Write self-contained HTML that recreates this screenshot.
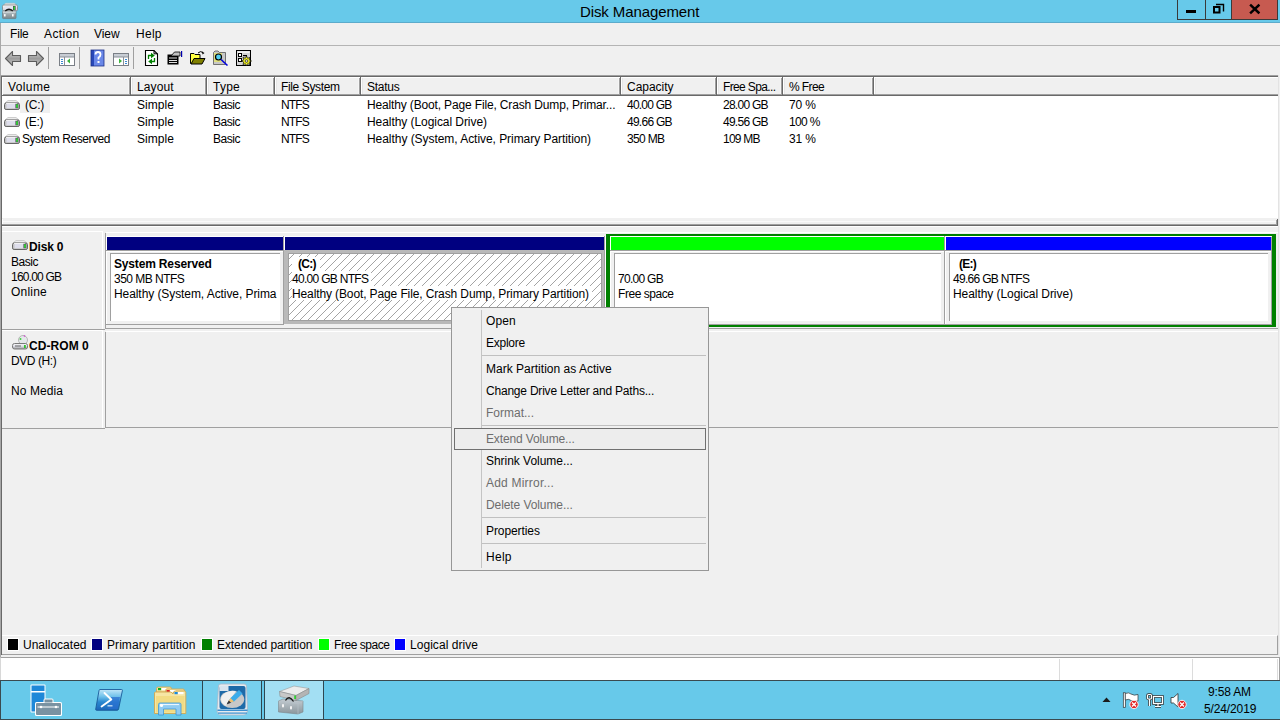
<!DOCTYPE html>
<html><head><meta charset="utf-8">
<style>
*{margin:0;padding:0;box-sizing:border-box}
html,body{width:1280px;height:720px;overflow:hidden;background:#f0f0f0;font-family:"Liberation Sans",sans-serif;font-size:12px;color:#000;position:relative}
.a{position:absolute}
.t{position:absolute;white-space:nowrap;line-height:14px;font-size:12px}
.b{font-weight:bold}
.g{color:#6d6d6d}
.hd{position:absolute;top:77px;width:1px;height:18px}
.hatch{background-color:#fff;background-image:repeating-linear-gradient(-45deg,#fff 0,#fff 4.6px,#9a9a9a 4.6px,#9a9a9a 5.66px)}
</style></head><body>
<svg width="0" height="0" style="position:absolute">
 <defs>
  <linearGradient id="dg" x1="0" y1="0" x2="0" y2="1"><stop offset="0" stop-color="#f8f8f8"/><stop offset="0.5" stop-color="#dcdce6"/><stop offset="1" stop-color="#9a9a9a"/></linearGradient>
  <symbol id="drvicon" viewBox="0 0 16 10">
   <path d="M4 0.5 H12 L15 3 H1 Z" fill="#ececec" stroke="#c4c4c4" stroke-width="0.8"/>
   <rect x="0.5" y="3" width="15" height="6.5" rx="1.6" fill="#c4c4c4" stroke="#666" stroke-width="1"/>
   <rect x="2.5" y="3.6" width="9" height="4.6" fill="#dedeec"/>
   <rect x="2" y="3.2" width="11" height="0.8" fill="#fff"/>
   <rect x="11.5" y="3.8" width="2.8" height="4.4" fill="#4a3a5a"/>
   <rect x="12.2" y="4.2" width="1.6" height="3.6" fill="#2ee62e"/>
  </symbol>
 </defs>
</svg>
<!-- title bar -->
<div class="a" style="left:0;top:0;width:1280px;height:23px;background:#67c9ea;border-bottom:1px solid #5cabcb"></div>
<svg class="a" style="left:0;top:0" width="24" height="22" viewBox="0 0 24 22">
 <defs>
  <linearGradient id="tbx" x1="0" y1="0" x2="0" y2="1"><stop offset="0" stop-color="#c4ccd0"/><stop offset="0.5" stop-color="#9aa4a8"/><stop offset="1" stop-color="#7c868a"/></linearGradient>
  <linearGradient id="dtop" x1="0" y1="0" x2="0" y2="1"><stop offset="0" stop-color="#f8f8f8"/><stop offset="1" stop-color="#d0d0d4"/></linearGradient>
 </defs>
 <rect x="2.5" y="11" width="13.5" height="7.6" rx="0.8" fill="url(#tbx)" stroke="#6e787c" stroke-width="0.7"/>
 <rect x="2.8" y="11.3" width="13" height="1.2" fill="#dde3e6"/>
 <rect x="4" y="14" width="1.6" height="2.6" rx="0.6" fill="#fff"/><rect x="12" y="14" width="1.6" height="2.6" rx="0.6" fill="#fff"/>
 <path d="M5.5 3.2 H14.5 L16.5 5.2 H3.5 Z" fill="#ececec" stroke="#b8b8b8" stroke-width="0.6"/>
 <rect x="2.5" y="5" width="15" height="5.8" rx="1.2" fill="url(#dtop)" stroke="#7a7a7a" stroke-width="0.7"/>
 <rect x="4.5" y="6.2" width="8.5" height="2.8" fill="#e4e4f0"/>
 <rect x="13" y="6" width="2.6" height="4.2" fill="#4a3a5a"/>
 <rect x="13.6" y="6.4" width="1.4" height="3.4" fill="#28e028"/>
 <path d="M5.2 11 Q9 7.6 12.8 11" fill="none" stroke="#1a1a1a" stroke-width="1.3"/>
</svg>
<div class="t" style="left:580px;top:3px;font-size:15px;line-height:17px;color:#000;letter-spacing:-0.099px">Disk Management</div>
<!-- caption buttons -->
<div class="a" style="left:1177px;top:0;width:29px;height:20px;border:1px solid #3a3a3a;border-top:0"></div>
<div class="a" style="left:1205px;top:0;width:27px;height:20px;border:1px solid #3a3a3a;border-top:0"></div>
<div class="a" style="left:1231px;top:0;width:47px;height:20px;border:1px solid #3a3a3a;border-top:0;background:#c75a50"></div>
<div class="a" style="left:1186px;top:10px;width:10px;height:3px;background:#000"></div>
<svg class="a" style="left:1210px;top:2px" width="16" height="14" viewBox="1210 2 16 14">
 <path d="M1216 4.5 H1223.5 V11.5" fill="none" stroke="#000" stroke-width="1.4"/>
 <rect x="1214" y="7" width="5.5" height="5.5" fill="none" stroke="#000" stroke-width="2"/>
</svg>
<svg class="a" style="left:1248px;top:3px" width="13" height="12" viewBox="1248 3 13 12">
 <path d="M1251 5.5 L1258.5 12.5 M1258.5 5.5 L1251 12.5" stroke="#000" stroke-width="2.4" stroke-linecap="square"/>
</svg>

<!-- menu bar -->
<div class="t" style="left:10px;top:27px;letter-spacing:-0.181px">File</div>
<div class="t" style="left:44px;top:27px;letter-spacing:0.388px">Action</div>
<div class="t" style="left:94px;top:27px;letter-spacing:-0.066px">View</div>
<div class="t" style="left:136px;top:27px;letter-spacing:0.271px">Help</div>
<div class="a" style="left:0;top:45px;width:1280px;height:1px;background:#b4b4b4"></div>

<!-- toolbar -->
<svg class="a" style="left:0;top:46px" width="260" height="26" viewBox="0 46 260 26">
 <defs>
  <linearGradient id="ar" x1="0" y1="0" x2="0" y2="1"><stop offset="0" stop-color="#d0d0d0"/><stop offset="0.5" stop-color="#9c9c9c"/><stop offset="1" stop-color="#c8c8c8"/></linearGradient>
 </defs>
 <path d="M5.5 58.5 L12.5 51.5 V55.5 H20.5 V61.5 H12.5 V65.5 Z" fill="url(#ar)" stroke="#5c5c5c" stroke-width="1.1" stroke-linejoin="round"/>
 <path d="M43.5 58.5 L36.5 51.5 V55.5 H28.5 V61.5 H36.5 V65.5 Z" fill="url(#ar)" stroke="#5c5c5c" stroke-width="1.1" stroke-linejoin="round"/>
 <rect x="48" y="47" width="1" height="22" fill="#a0a0a0"/>
 <rect x="79" y="47" width="1" height="22" fill="#a0a0a0"/>
 <rect x="133" y="47" width="1" height="22" fill="#a0a0a0"/>
 <!-- icon3 -->
 <rect x="59.5" y="53.5" width="15" height="12" fill="#fff" stroke="#7a7f86"/>
 <rect x="60" y="54" width="14" height="3" fill="#c8cdd4"/>
 <rect x="60" y="56.5" width="14" height="1" fill="#8a9098"/>
 <rect x="64" y="57" width="1" height="8" fill="#8a9098"/>
 <rect x="61" y="59" width="2" height="1" fill="#3a8ad0"/><rect x="61" y="61" width="2" height="1" fill="#3a8ad0"/><rect x="61" y="63" width="2" height="1" fill="#3a8ad0"/>
 <path d="M67 61 L70 58.5 V63.5 Z" fill="#3cb43c"/>
 <!-- help -->
 <rect x="91" y="50" width="13" height="16" fill="#6a88e8"/>
 <rect x="91" y="50" width="3" height="16" fill="#2848b8"/>
 <rect x="91" y="50" width="13" height="16" fill="none" stroke="#1c3088" stroke-width="0.8"/>
 <path d="M95.5 54.5 Q95.5 52 98 52 Q100.5 52 100.5 54.5 Q100.5 56.5 98.5 57.5 V59.5" fill="none" stroke="#fff" stroke-width="1.8"/>
 <rect x="97.5" y="61" width="2" height="2" fill="#fff"/>
 <!-- icon5 -->
 <rect x="113.5" y="53.5" width="15" height="12" fill="#fff" stroke="#7a7f86"/>
 <rect x="114" y="54" width="14" height="3" fill="#c8cdd4"/>
 <rect x="114" y="56.5" width="14" height="1" fill="#8a9098"/>
 <rect x="123" y="57" width="1" height="8" fill="#8a9098"/>
 <rect x="125" y="59" width="2" height="1" fill="#3a8ad0"/><rect x="125" y="61" width="2" height="1" fill="#3a8ad0"/><rect x="125" y="63" width="2" height="1" fill="#3a8ad0"/>
 <path d="M119 58.5 L122 61 L119 63.5 Z" fill="#3cb43c"/>
 <!-- refresh doc -->
 <path d="M145.5 50.5 H154 L157.5 54 V65.5 H145.5 Z" fill="#fff" stroke="#000" stroke-width="1.1"/>
 <path d="M154 50.5 V53.8 H157.5" fill="none" stroke="#000" stroke-width="1"/>
 <path d="M148.5 59 V55.5 H152" fill="none" stroke="#008000" stroke-width="1.3"/>
 <path d="M151 52.8 L154.8 55.5 L151 58.2 Z" fill="#008000"/>
 <path d="M154.5 58 V61.5 H151" fill="none" stroke="#008000" stroke-width="1.3"/>
 <path d="M152 58.8 L148.2 61.5 L152 64.2 Z" fill="#008000"/>
 <!-- rescan -->
 <rect x="167.5" y="54.5" width="11" height="10" fill="#000"/>
 <rect x="169" y="57.5" width="8" height="1" fill="#ddd"/><rect x="169" y="60" width="8" height="1" fill="#ddd"/><rect x="169" y="62" width="8" height="1" fill="#ddd"/>
 <path d="M171 56 L174.5 52 H180 V56 H175 Z" fill="#c0c0c0" stroke="#000" stroke-width="0.8"/>
 <rect x="181" y="51" width="1.2" height="6" fill="#0000b0"/>
 <!-- open folder -->
 <path d="M190.5 53.5 H194 L195 54.5 H200 V63.5 H190.5 Z" fill="#ffff40" stroke="#000" stroke-width="1"/>
 <path d="M191 64 L194 58.5 H205 L202 64 Z" fill="#808000" stroke="#000" stroke-width="1"/>
 <path d="M198 53 Q200.5 50.5 203 52.5" fill="none" stroke="#000" stroke-width="1"/>
 <path d="M202 51.5 L204.5 53 L202.5 54.5 Z" fill="#000"/>
 <!-- search -->
 <path d="M213.5 52.5 L215 51 H218 L219.5 52.5 H225.5 V64.5 H213.5 Z" fill="#c8c8c8" stroke="#555" stroke-width="0.8"/>
 <rect x="214" y="53" width="8" height="9" fill="#e8e860" opacity="0.7"/>
 <circle cx="218.5" cy="57" r="3" fill="#50d0f0" stroke="#000" stroke-width="1.2"/>
 <path d="M221 59.5 L227.5 65.5" stroke="#0000e0" stroke-width="1.6"/>
 <!-- settings -->
 <rect x="236.5" y="50.5" width="14" height="15" fill="#d4d4d4" stroke="#000" stroke-width="1"/>
 <rect x="237.5" y="51.5" width="12" height="1.2" fill="#fff"/>
 <rect x="238.5" y="53.5" width="3" height="3" fill="#fff" stroke="#000" stroke-width="1"/>
 <rect x="238.5" y="58.5" width="3" height="3" fill="#fff" stroke="#000" stroke-width="1"/>
 <rect x="243" y="55" width="4" height="1.2" fill="#000"/>
 <polygon points="246.50,56.00 247.61,58.32 250.04,57.46 249.18,59.89 251.50,61.00 249.18,62.11 250.04,64.54 247.61,63.68 246.50,66.00 245.39,63.68 242.96,64.54 243.82,62.11 241.50,61.00 243.82,59.89 242.96,57.46 245.39,58.32" fill="#ffff20" stroke="#000" stroke-width="0.7"/>
 <circle cx="246.5" cy="61" r="1.4" fill="#d4d4d4" stroke="#000" stroke-width="0.6"/>
</svg>
<!-- list frame -->
<div class="a" style="left:0px;top:75px;width:1279px;height:1px;background:#a0a0a0;"></div>
<div class="a" style="left:1px;top:76px;width:1278px;height:142px;background:#fff;border-left:1px solid #696969;border-top:1px solid #696969;border-right:1px solid #e3e3e3"></div>
<div class="a" style="left:2px;top:77px;width:1276px;height:19px;background:#f0f0f0;border-top:1px solid #fff;border-bottom:1px solid #696969;box-shadow:inset 0 -1px 0 #a0a0a0"></div>
<div class="a" style="left:2px;top:77px;width:1px;height:18px;background:#fff;"></div>
<div class="a" style="left:129px;top:78px;width:1px;height:16px;background:#a0a0a0;"></div>
<div class="a" style="left:130px;top:77px;width:1px;height:18px;background:#696969;"></div>
<div class="a" style="left:131px;top:77px;width:1px;height:17px;background:#fff;"></div>
<div class="a" style="left:132px;top:78px;width:1px;height:16px;background:#e6e6e6;"></div>
<div class="a" style="left:128px;top:78px;width:1px;height:16px;background:#f6f6f6;"></div>
<div class="a" style="left:205px;top:78px;width:1px;height:16px;background:#a0a0a0;"></div>
<div class="a" style="left:206px;top:77px;width:1px;height:18px;background:#696969;"></div>
<div class="a" style="left:207px;top:77px;width:1px;height:17px;background:#fff;"></div>
<div class="a" style="left:208px;top:78px;width:1px;height:16px;background:#e6e6e6;"></div>
<div class="a" style="left:204px;top:78px;width:1px;height:16px;background:#f6f6f6;"></div>
<div class="a" style="left:273px;top:78px;width:1px;height:16px;background:#a0a0a0;"></div>
<div class="a" style="left:274px;top:77px;width:1px;height:18px;background:#696969;"></div>
<div class="a" style="left:275px;top:77px;width:1px;height:17px;background:#fff;"></div>
<div class="a" style="left:276px;top:78px;width:1px;height:16px;background:#e6e6e6;"></div>
<div class="a" style="left:272px;top:78px;width:1px;height:16px;background:#f6f6f6;"></div>
<div class="a" style="left:359px;top:78px;width:1px;height:16px;background:#a0a0a0;"></div>
<div class="a" style="left:360px;top:77px;width:1px;height:18px;background:#696969;"></div>
<div class="a" style="left:361px;top:77px;width:1px;height:17px;background:#fff;"></div>
<div class="a" style="left:362px;top:78px;width:1px;height:16px;background:#e6e6e6;"></div>
<div class="a" style="left:358px;top:78px;width:1px;height:16px;background:#f6f6f6;"></div>
<div class="a" style="left:619px;top:78px;width:1px;height:16px;background:#a0a0a0;"></div>
<div class="a" style="left:620px;top:77px;width:1px;height:18px;background:#696969;"></div>
<div class="a" style="left:621px;top:77px;width:1px;height:17px;background:#fff;"></div>
<div class="a" style="left:622px;top:78px;width:1px;height:16px;background:#e6e6e6;"></div>
<div class="a" style="left:618px;top:78px;width:1px;height:16px;background:#f6f6f6;"></div>
<div class="a" style="left:715px;top:78px;width:1px;height:16px;background:#a0a0a0;"></div>
<div class="a" style="left:716px;top:77px;width:1px;height:18px;background:#696969;"></div>
<div class="a" style="left:717px;top:77px;width:1px;height:17px;background:#fff;"></div>
<div class="a" style="left:718px;top:78px;width:1px;height:16px;background:#e6e6e6;"></div>
<div class="a" style="left:714px;top:78px;width:1px;height:16px;background:#f6f6f6;"></div>
<div class="a" style="left:781px;top:78px;width:1px;height:16px;background:#a0a0a0;"></div>
<div class="a" style="left:782px;top:77px;width:1px;height:18px;background:#696969;"></div>
<div class="a" style="left:783px;top:77px;width:1px;height:17px;background:#fff;"></div>
<div class="a" style="left:784px;top:78px;width:1px;height:16px;background:#e6e6e6;"></div>
<div class="a" style="left:780px;top:78px;width:1px;height:16px;background:#f6f6f6;"></div>
<div class="a" style="left:872px;top:78px;width:1px;height:16px;background:#a0a0a0;"></div>
<div class="a" style="left:873px;top:77px;width:1px;height:18px;background:#696969;"></div>
<div class="a" style="left:874px;top:77px;width:1px;height:17px;background:#fff;"></div>
<div class="a" style="left:875px;top:78px;width:1px;height:16px;background:#e6e6e6;"></div>
<div class="a" style="left:871px;top:78px;width:1px;height:16px;background:#f6f6f6;"></div>
<div class="t" style="left:8px;top:80px;letter-spacing:0.394px">Volume</div>
<div class="t" style="left:137px;top:80px;letter-spacing:0.094px">Layout</div>
<div class="t" style="left:213px;top:80px;letter-spacing:0.245px">Type</div>
<div class="t" style="left:281px;top:80px;letter-spacing:-0.369px">File System</div>
<div class="t" style="left:367px;top:80px;letter-spacing:-0.256px">Status</div>
<div class="t" style="left:627px;top:80px;letter-spacing:-0.027px">Capacity</div>
<div class="t" style="left:723px;top:80px;letter-spacing:-0.637px">Free Spa...</div>
<div class="t" style="left:789px;top:80px;letter-spacing:-0.588px">% Free</div>
<div class="a" style="left:20px;top:96px;width:30px;height:17px;background:#f0f0f0;"></div>
<div class="t" style="left:25px;top:98px;letter-spacing:-0.250px">(C:)</div>
<div class="t" style="left:137px;top:98px;letter-spacing:0.062px">Simple</div>
<div class="t" style="left:213px;top:98px;letter-spacing:-0.461px">Basic</div>
<div class="t" style="left:281px;top:98px;letter-spacing:-0.865px">NTFS</div>
<div class="t" style="left:367px;top:98px;letter-spacing:-0.151px">Healthy (Boot, Page File, Crash Dump, Primar...</div>
<div class="t" style="left:627px;top:98px;letter-spacing:-0.779px">40.00 GB</div>
<div class="t" style="left:723px;top:98px;letter-spacing:-0.743px">28.00 GB</div>
<div class="t" style="left:789px;top:98px;letter-spacing:-0.120px">70 %</div>
<svg class="a" style="left:4px;top:100px" width="16" height="10"><use href="#drvicon"/></svg>
<div class="t" style="left:25px;top:115px;letter-spacing:-0.281px">(E:)</div>
<div class="t" style="left:137px;top:115px;letter-spacing:0.062px">Simple</div>
<div class="t" style="left:213px;top:115px;letter-spacing:-0.461px">Basic</div>
<div class="t" style="left:281px;top:115px;letter-spacing:-0.865px">NTFS</div>
<div class="t" style="left:367px;top:115px;letter-spacing:-0.063px">Healthy (Logical Drive)</div>
<div class="t" style="left:627px;top:115px;letter-spacing:-0.743px">49.66 GB</div>
<div class="t" style="left:723px;top:115px;letter-spacing:-0.743px">49.56 GB</div>
<div class="t" style="left:789px;top:115px;letter-spacing:-0.633px">100 %</div>
<svg class="a" style="left:4px;top:117px" width="16" height="10"><use href="#drvicon"/></svg>
<div class="t" style="left:22px;top:132px;letter-spacing:-0.443px">System Reserved</div>
<div class="t" style="left:137px;top:132px;letter-spacing:0.062px">Simple</div>
<div class="t" style="left:213px;top:132px;letter-spacing:-0.461px">Basic</div>
<div class="t" style="left:281px;top:132px;letter-spacing:-0.865px">NTFS</div>
<div class="t" style="left:367px;top:132px;letter-spacing:-0.049px">Healthy (System, Active, Primary Partition)</div>
<div class="t" style="left:627px;top:132px;letter-spacing:-0.672px">350 MB</div>
<div class="t" style="left:723px;top:132px;letter-spacing:-0.772px">109 MB</div>
<div class="t" style="left:789px;top:132px;letter-spacing:-0.120px">31 %</div>
<svg class="a" style="left:4px;top:134px" width="16" height="10"><use href="#drvicon"/></svg>
<!-- splitter -->
<div class="a" style="left:2px;top:218px;width:1276px;height:7px;background:#f0f0f0;"></div>
<div class="a" style="left:2px;top:221px;width:1276px;height:1px;background:#fafafa;"></div>
<div class="a" style="left:1px;top:225px;width:1277px;height:1px;background:#696969;"></div>
<div class="a" style="left:2px;top:224px;width:1275px;height:1px;background:#a0a0a0;"></div>
<div class="a" style="left:1277px;top:219px;width:1px;height:7px;background:#696969;"></div>
<div class="a" style="left:1px;top:218px;width:1px;height:8px;background:#696969;"></div>
<div class="a" style="left:2px;top:219px;width:1px;height:5px;background:#fff;"></div>
<div class="a" style="left:1276px;top:220px;width:1px;height:5px;background:#a0a0a0;"></div>
<!-- graphic pane -->
<div class="a" style="left:2px;top:226px;width:1276px;height:1px;background:#fff;"></div>
<div class="a" style="left:2px;top:231px;width:101px;height:1px;background:#fff;"></div>
<div class="a" style="left:102px;top:232px;width:1px;height:97px;background:#fff;"></div>
<div class="a" style="left:2px;top:329px;width:103px;height:1px;background:#a0a0a0;"></div>
<div class="a" style="left:105px;top:233px;width:1px;height:96px;background:#a0a0a0;"></div>
<div class="a" style="left:106px;top:232px;width:1172px;height:1px;background:#fff;"></div>
<div class="a" style="left:106px;top:328px;width:1172px;height:1px;background:#a0a0a0;"></div>
<svg class="a" style="left:12px;top:240px" width="16" height="10"><use href="#drvicon"/></svg>
<div class="t b" style="left:29px;top:240px;letter-spacing:-0.172px">Disk 0</div>
<div class="t" style="left:11px;top:255px;letter-spacing:-0.461px">Basic</div>
<div class="t" style="left:11px;top:270px;letter-spacing:-0.797px">160.00 GB</div>
<div class="t" style="left:11px;top:285px;letter-spacing:0.212px">Online</div>
<div class="a" style="left:106px;top:236px;width:1px;height:88px;background:#fff;"></div>
<div class="a" style="left:106px;top:236px;width:177px;height:1px;background:#fff;"></div>
<div class="a" style="left:107px;top:237px;width:176px;height:13px;background:#000080;"></div>
<div class="a" style="left:106px;top:250px;width:177px;height:1px;background:#a0a0a0;"></div>
<div class="a" style="left:106px;top:251px;width:177px;height:1px;background:#fff;"></div>
<div class="a" style="left:106px;top:324px;width:177px;height:1px;background:#a0a0a0;"></div>
<div class="a" style="left:110px;top:253px;width:170px;height:68px;background:#fff;border-left:1px solid #a0a0a0;border-top:1px solid #a0a0a0"></div>
<div class="t b" style="left:114px;top:257px;letter-spacing:-0.165px">System Reserved</div>
<div class="t" style="left:114px;top:272px;letter-spacing:-0.528px">350 MB NTFS</div>
<div class="t" style="left:114px;top:287px;letter-spacing:-0.077px">Healthy (System, Active, Prima</div>
<div class="a" style="left:283px;top:236px;width:1px;height:89px;background:#a0a0a0;"></div>
<div class="a" style="left:284px;top:236px;width:320px;height:1px;background:#fff;"></div>
<div class="a" style="left:284px;top:236px;width:1px;height:14px;background:#fff;"></div>
<div class="a" style="left:285px;top:237px;width:319px;height:13px;background:#000080;"></div>
<div class="a" style="left:284px;top:250px;width:320px;height:74px;background:#b9b9b9;"></div>
<svg class="a" style="left:288px;top:253px" width="314" height="68" viewBox="288 253 314 68"><defs><pattern id="hp" patternUnits="userSpaceOnUse" x="0" y="0" width="8" height="8"><rect width="8" height="8" fill="#fff"/><rect x="0" y="3" width="1" height="1" fill="#a4a4a4"/><rect x="1" y="2" width="1" height="1" fill="#a4a4a4"/><rect x="2" y="1" width="1" height="1" fill="#a4a4a4"/><rect x="3" y="0" width="1" height="1" fill="#a4a4a4"/><rect x="4" y="7" width="1" height="1" fill="#a4a4a4"/><rect x="5" y="6" width="1" height="1" fill="#a4a4a4"/><rect x="6" y="5" width="1" height="1" fill="#a4a4a4"/><rect x="7" y="4" width="1" height="1" fill="#a4a4a4"/></pattern></defs><rect x="288" y="253" width="314" height="68" fill="#a0a0a0"/><rect x="289" y="254" width="312" height="66" fill="url(#hp)"/></svg>
<div class="a" style="left:604px;top:236px;width:1px;height:89px;background:#a0a0a0;"></div>
<div class="a" style="left:605px;top:236px;width:1px;height:89px;background:#fff;"></div>
<div class="a" style="left:292px;top:257px;width:28px;height:14px;background:#fff;"></div>
<div class="a" style="left:292px;top:271px;width:79px;height:15px;background:#fff;"></div>
<div class="a" style="left:292px;top:286px;width:300px;height:14px;background:#fff;"></div>
<div class="t b" style="left:298px;top:257px;letter-spacing:-0.719px">(C:)</div>
<div class="t" style="left:292px;top:272px;letter-spacing:-0.706px">40.00 GB NTFS</div>
<div class="t" style="left:292px;top:287px;letter-spacing:-0.117px">Healthy (Boot, Page File, Crash Dump, Primary Partition)</div>
<div class="a" style="left:606px;top:234px;width:670px;height:93px;background:transparent;border:2px solid #008000;border-left-width:4px;border-right-width:4px;box-sizing:border-box"></div>
<div class="a" style="left:610px;top:236px;width:1px;height:88px;background:#fff;"></div>
<div class="a" style="left:610px;top:236px;width:334px;height:1px;background:#fff;"></div>
<div class="a" style="left:611px;top:237px;width:333px;height:13px;background:#00ff00;"></div>
<div class="a" style="left:610px;top:250px;width:334px;height:1px;background:#a0a0a0;"></div>
<div class="a" style="left:610px;top:251px;width:334px;height:1px;background:#fff;"></div>
<div class="a" style="left:610px;top:324px;width:334px;height:1px;background:#a0a0a0;"></div>
<div class="a" style="left:614px;top:253px;width:327px;height:68px;background:#fff;border-left:1px solid #a0a0a0;border-top:1px solid #a0a0a0"></div>
<div class="a" style="left:944px;top:236px;width:1px;height:89px;background:#a0a0a0;"></div>
<div class="a" style="left:945px;top:236px;width:1px;height:88px;background:#fff;"></div>
<div class="a" style="left:945px;top:236px;width:326px;height:1px;background:#fff;"></div>
<div class="a" style="left:946px;top:237px;width:325px;height:13px;background:#0000ff;"></div>
<div class="a" style="left:945px;top:250px;width:326px;height:1px;background:#a0a0a0;"></div>
<div class="a" style="left:945px;top:251px;width:326px;height:1px;background:#fff;"></div>
<div class="a" style="left:945px;top:324px;width:326px;height:1px;background:#a0a0a0;"></div>
<div class="a" style="left:949px;top:253px;width:319px;height:68px;background:#fff;border-left:1px solid #a0a0a0;border-top:1px solid #a0a0a0"></div>
<div class="a" style="left:1271px;top:237px;width:1px;height:88px;background:#a0a0a0;"></div>
<div class="t" style="left:618px;top:272px;letter-spacing:-0.708px">70.00 GB</div>
<div class="t" style="left:618px;top:287px;letter-spacing:-0.448px">Free space</div>
<div class="t b" style="left:959px;top:257px;letter-spacing:-0.767px">(E:)</div>
<div class="t" style="left:953px;top:272px;letter-spacing:-0.698px">49.66 GB NTFS</div>
<div class="t" style="left:953px;top:287px;letter-spacing:-0.063px">Healthy (Logical Drive)</div>
<div class="a" style="left:2px;top:330px;width:101px;height:1px;background:#fff;"></div>
<div class="a" style="left:102px;top:331px;width:1px;height:97px;background:#fff;"></div>
<div class="a" style="left:2px;top:428px;width:103px;height:1px;background:#a0a0a0;"></div>
<div class="a" style="left:105px;top:332px;width:1px;height:96px;background:#a0a0a0;"></div>
<div class="a" style="left:106px;top:331px;width:1172px;height:1px;background:#fff;"></div>
<div class="a" style="left:106px;top:427px;width:1172px;height:1px;background:#a0a0a0;"></div>
<svg class="a" style="left:11px;top:334px" width="18" height="16" viewBox="0 0 18 16">
 <circle cx="12" cy="6" r="4.5" fill="#e4e8ea" stroke="#a8a8a8" stroke-width="0.8"/>
 <circle cx="9.5" cy="5" r="1" fill="#40d040"/><circle cx="13.5" cy="2" r="0.8" fill="#d040d0"/>
 <rect x="1.5" y="9.5" width="15" height="5.5" rx="2" fill="url(#dg)" stroke="#7a7a7a" stroke-width="1"/>
 <rect x="4" y="11.5" width="6" height="1" fill="#666"/>
 <rect x="13" y="11" width="1.8" height="3" fill="#30c030"/>
</svg>
<div class="t b" style="left:29px;top:339px;letter-spacing:0.065px">CD-ROM 0</div>
<div class="t" style="left:11px;top:354px;letter-spacing:-0.425px">DVD (H:)</div>
<div class="t" style="left:11px;top:384px;letter-spacing:0.077px">No Media</div>
<!-- legend -->
<div class="a" style="left:1px;top:226px;width:1px;height:429px;background:#696969"></div>
<div class="a" style="left:0;top:0;width:1px;height:680px;background:#a8a8a8;top:23px"></div>
<div class="a" style="left:2px;top:635px;width:1276px;height:20px;border-top:1px solid #fff;border-right:1px solid #a0a0a0;border-bottom:1px solid #a0a0a0"></div>
<div class="a" style="left:1278px;top:75px;width:1px;height:580px;background:#e3e3e3"></div>
<div class="a" style="left:7px;top:638px;width:12px;height:13px;background:#000;border:1px solid #fff"></div>
<div class="t" style="left:23px;top:638px;letter-spacing:0.013px">Unallocated</div>
<div class="a" style="left:91px;top:638px;width:12px;height:13px;background:#000080;border:1px solid #fff"></div>
<div class="t" style="left:107px;top:638px;letter-spacing:0.065px">Primary partition</div>
<div class="a" style="left:201px;top:638px;width:12px;height:13px;background:#008000;border:1px solid #fff"></div>
<div class="t" style="left:217px;top:638px;letter-spacing:-0.073px">Extended partition</div>
<div class="a" style="left:318px;top:638px;width:12px;height:13px;background:#00ff00;border:1px solid #fff"></div>
<div class="t" style="left:334px;top:638px;letter-spacing:-0.448px">Free space</div>
<div class="a" style="left:394px;top:638px;width:12px;height:13px;background:#0000ff;border:1px solid #fff"></div>
<div class="t" style="left:410px;top:638px;letter-spacing:0.044px">Logical drive</div>

<!-- status bar -->
<div class="a" style="left:0;top:657px;width:1280px;height:23px;background:#fff;border-top:1px solid #a0a0a0;border-right:1px solid #a0a0a0;border-left:1px solid #d8d8d8"></div>
<div class="a" style="left:1059px;top:659px;width:1px;height:21px;background:#dcdcdc"></div>
<div class="a" style="left:1192px;top:659px;width:1px;height:21px;background:#dcdcdc"></div>
<div class="a" style="left:1277px;top:659px;width:1px;height:21px;background:#dcdcdc"></div>

<!-- taskbar -->
<div class="a" style="left:0;top:680px;width:1280px;height:40px;background:#67c9ea;border-top:1px solid #3a4a50;border-bottom:1px solid #3a4a50;border-left:1px solid #3a4a50"></div>
<div class="a" style="left:202px;top:681px;width:60px;height:38px;background:#77d0ee;border-left:1px solid #2e4650;border-right:1px solid #2e4650"></div>
<div class="a" style="left:264px;top:681px;width:60px;height:38px;background:#a3dff3;border-left:1px solid #2e4650;border-right:1px solid #2e4650"></div>
<!-- context menu -->
<div class="a" style="left:451px;top:307px;width:258px;height:264px;background:#f0f0f0;border:1px solid #979797"></div>
<div class="a" style="left:481px;top:310px;width:1px;height:258px;background:#e0e0e0"></div>
<div class="a" style="left:481px;top:310px;width:1px;height:258px;background:#c4c4c4"></div>
<div class="t" style="left:486px;top:314px;letter-spacing:0.147px">Open</div>
<div class="t" style="left:486px;top:336px;letter-spacing:-0.248px">Explore</div>
<div class="a" style="left:482px;top:355px;width:224px;height:1px;background:#c0c0c0"></div>
<div class="t" style="left:486px;top:362px;letter-spacing:0.013px">Mark Partition as Active</div>
<div class="t" style="left:486px;top:384px;letter-spacing:-0.209px">Change Drive Letter and Paths...</div>
<div class="t g" style="left:486px;top:406px;letter-spacing:-0.002px">Format...</div>
<div class="a" style="left:482px;top:425px;width:224px;height:1px;background:#c0c0c0"></div>
<div class="a" style="left:454px;top:428px;width:252px;height:22px;border:1px solid #707070;background:#ededed"></div>
<div class="t g" style="left:486px;top:432px;letter-spacing:-0.129px">Extend Volume...</div>
<div class="t" style="left:486px;top:454px;letter-spacing:-0.038px">Shrink Volume...</div>
<div class="t g" style="left:486px;top:476px;letter-spacing:0.212px">Add Mirror...</div>
<div class="t g" style="left:486px;top:498px;letter-spacing:-0.084px">Delete Volume...</div>
<div class="a" style="left:482px;top:517px;width:224px;height:1px;background:#c0c0c0"></div>
<div class="t" style="left:486px;top:524px;letter-spacing:-0.089px">Properties</div>
<div class="a" style="left:482px;top:543px;width:224px;height:1px;background:#c0c0c0"></div>
<div class="t" style="left:486px;top:550px;letter-spacing:0.271px">Help</div>
<!-- taskbar icons -->
<svg class="a" style="left:0;top:681px" width="340" height="38" viewBox="0 681 340 38">
 <defs>
  <linearGradient id="ps" x1="0" y1="0" x2="1" y2="1"><stop offset="0" stop-color="#8ac8ee"/><stop offset="0.5" stop-color="#2a78c0"/><stop offset="1" stop-color="#1a5aa8"/></linearGradient>
  <linearGradient id="fold" x1="0" y1="0" x2="0" y2="1"><stop offset="0" stop-color="#fff0b0"/><stop offset="1" stop-color="#e8c860"/></linearGradient>
  <linearGradient id="tb" x1="0" y1="0" x2="0" y2="1"><stop offset="0" stop-color="#c8ccd0"/><stop offset="1" stop-color="#6c7478"/></linearGradient>
  <linearGradient id="hd" x1="0" y1="0" x2="0" y2="1"><stop offset="0" stop-color="#f0f0f0"/><stop offset="1" stop-color="#9a9a9a"/></linearGradient>
 </defs>
 <!-- server manager -->
 <rect x="30.5" y="684.5" width="15" height="28" rx="1" fill="#fff"/>
 <rect x="31.5" y="685.5" width="13" height="5.5" fill="#1e88d8"/>
 <rect x="31.5" y="692.5" width="13" height="19" fill="#1e88d8"/>
 <rect x="35" y="702" width="27" height="14" rx="1.5" fill="#fff"/>
 <rect x="44" y="699" width="9" height="4" rx="1" fill="#7890a0" stroke="#fff" stroke-width="1"/>
 <rect x="36" y="703" width="25" height="12" rx="1" fill="#7a92a2"/>
 <path d="M37.5 707 H59" stroke="#fff" stroke-width="1"/>
 <circle cx="41" cy="707" r="1.3" fill="#fff"/><circle cx="56" cy="707" r="1.3" fill="#fff"/>
 <!-- powershell -->
 <defs>
  <linearGradient id="ps2" x1="0" y1="0" x2="0" y2="1"><stop offset="0" stop-color="#c0e6f8"/><stop offset="0.35" stop-color="#6cc0ea"/><stop offset="0.6" stop-color="#2a88d0"/><stop offset="1" stop-color="#1a64b8"/></linearGradient>
 </defs>
 <path d="M100 689.5 H121.5 Q122.6 689.5 122.4 690.6 L118.6 709 Q118.4 710.3 117 710.3 H96.6 Q95.5 710.3 95.7 709.2 L99 690.6 Q99.2 689.5 100 689.5 Z" fill="url(#ps2)" stroke="#1a5a9a" stroke-width="0.9"/>
 <path d="M111 697 L120 697 L117.5 709 H108 Z" fill="#2a6ed0" opacity="0.7"/>
 <path d="M104.5 693 L111.3 699.5 L101.6 706.5" fill="none" stroke="#fff" stroke-width="1.9" stroke-linecap="round" stroke-linejoin="round"/>
 <path d="M107.5 705.8 H112.5" stroke="#b8d8f4" stroke-width="1.4"/>
 <!-- explorer -->
 <path d="M156.5 692 V688.5 Q156.5 687 158 687 H170 Q171.5 687 171.5 688.5 V692 Z" fill="#f4e0a0" stroke="#d0a850" stroke-width="0.8"/>
 <rect x="158" y="688" width="3.2" height="2.2" fill="#10b020"/><rect x="161.5" y="688" width="5" height="2.2" fill="#fff"/>
 <path d="M165.5 694 V690.5 Q165.5 689 167 689 H183 Q184.5 689 184.5 690.5 V694 Z" fill="#f4e0a0" stroke="#d0a850" stroke-width="0.8"/>
 <rect x="166.5" y="690" width="3.2" height="2.2" fill="#d82020"/><rect x="170" y="690" width="6" height="2.2" fill="#fff"/>
 <path d="M154.5 713.5 V693 Q154.5 692 155.5 692 H171 L173 694 Q173.5 691 175 691 H184.5 Q185.8 691 185.8 692.5 V713.5 Z" fill="#f6e6a4" stroke="#d0a850" stroke-width="0.9"/>
 <rect x="174.5" y="692" width="3.2" height="2.2" fill="#1a8ae0"/><rect x="178" y="692" width="5.5" height="2.2" fill="#fff"/>
 <rect x="156" y="696" width="28.5" height="16.5" fill="#f2dc84"/>
 <path d="M158.5 715 V704.5 Q158.5 703 160 703 H179.5 Q181 703 181 704.5 V715 H176 V709 H163.5 V715 Z" fill="#90ccf2" stroke="#3a98d8" stroke-width="0.8"/>
 <path d="M160 704.5 H179" stroke="#e8f6ff" stroke-width="1.2"/>
 <circle cx="161.5" cy="705.5" r="1.6" fill="#fff"/>
 <!-- partition wizard -->
 <path d="M218.5 686 Q218.5 684 221 684 H244 Q246.5 684 246.5 686 L247.5 710 Q247.5 715 243 715 H221 Q217 715 217 710 Z" fill="#e6eaee" stroke="#a8b8c8" stroke-width="0.8"/>
 <rect x="219.5" y="686" width="26" height="23" rx="2" fill="#1e6aa8"/>
 <rect x="219.5" y="686" width="9" height="5" fill="#d8e4ee"/>
 <ellipse cx="232.2" cy="699.3" rx="12" ry="8.6" fill="#c8c8c8"/>
 <path d="M221 699 A12 8.6 0 0 1 236 691 L226 706 A12 8.6 0 0 1 221 699 Z" fill="#f0f0f0"/>
 <path d="M227 703.5 L230.5 698 L239 690 L242.5 693.5 L234 701.5 Z" fill="#3cacea"/>
 <path d="M227 703.5 L230.5 698 L234 701.5 Z" fill="#f0c070"/>
 <path d="M226.5 704.5 L228.8 700.5 L231 702.7 Z" fill="#303038"/>
 <rect x="217.5" y="709.5" width="30" height="1.5" fill="#3a90d0"/>
 <rect x="218" y="712.5" width="29" height="1.2" fill="#3a90d0"/>
 <!-- disk mgmt -->
 <defs>
  <linearGradient id="tb2" x1="0" y1="0" x2="0" y2="1"><stop offset="0" stop-color="#c4ccd2"/><stop offset="1" stop-color="#8a969c"/></linearGradient>
 </defs>
 <path d="M278.5 701 L283 699 L303 701 V712 L298 714 L278.5 712 Z" fill="url(#tb2)" stroke="#7c868c" stroke-width="0.6"/>
 <path d="M298 703.5 V714 M278.5 701 L298 703.5 L303 701" fill="none" stroke="#b8c2c8" stroke-width="0.7"/>
 <rect x="282" y="704" width="2" height="3.5" rx="1" fill="#f4f4f4"/><rect x="290" y="706" width="2" height="3.5" rx="1" fill="#f4f4f4"/>
 <path d="M279.5 691.5 L294 686 L309 688.5 L296 695.5 Z" fill="#ececec" stroke="#9a9a9a" stroke-width="0.6"/>
 <path d="M279.5 691.5 L296 695.5 V700.5 L280 696.5 Z" fill="#c8c8c8" stroke="#8a8a8a" stroke-width="0.6"/>
 <path d="M296 695.5 L309 688.5 V693.5 L296 700.5 Z" fill="#b4b4b4" stroke="#8a8a8a" stroke-width="0.6"/>
 <path d="M285.5 700.5 Q289 694.5 293.5 701.5" fill="none" stroke="#1a1a1a" stroke-width="1.3"/>
 <rect x="294.2" y="695.5" width="1.8" height="3.5" fill="#30d030"/>
</svg>
<!-- tray -->
<svg class="a" style="left:1095px;top:681px" width="100" height="38" viewBox="1095 681 100 38">
 <path d="M1102.5 702 L1106.5 697.5 L1110.5 702 Z" fill="#1a1a1a"/>
 <!-- flag -->
 <rect x="1123.3" y="692.8" width="2" height="14.5" fill="#fff" stroke="#303030" stroke-width="0.7"/>
 <path d="M1125.3 693.5 Q1129 692 1131 694 Q1134 696 1138 694.5 V701 Q1134 702.5 1131 700.5 Q1129 698.5 1125.3 700 Z" fill="#fff" stroke="#303030" stroke-width="0.7"/>
 <circle cx="1134" cy="704.5" r="4.2" fill="#e02828" stroke="#fff" stroke-width="0.9"/>
 <path d="M1132 702.5 L1136 706.5 M1136 702.5 L1132 706.5" stroke="#fff" stroke-width="1.3"/>
 <!-- network -->
 <g fill="none" stroke="#303030" stroke-width="2.6">
  <rect x="1147.5" y="694.5" width="4" height="4.5" rx="1"/>
  <path d="M1149.5 699 V706"/>
  <rect x="1153.5" y="696.5" width="9" height="7"/>
  <path d="M1155 706.5 H1161 M1158 703.5 V706.5"/>
 </g>
 <g fill="none" stroke="#fff" stroke-width="1.2">
  <rect x="1147.5" y="694.5" width="4" height="4.5" rx="1"/>
  <path d="M1149.5 699 V706"/>
  <rect x="1153.5" y="696.5" width="9" height="7"/>
  <path d="M1155 706.5 H1161 M1158 703.5 V706.5"/>
 </g>
 <!-- speaker -->
 <path d="M1171 697.5 H1173.5 L1178 693.5 V707 L1173.5 703 H1171 Z" fill="#fff" stroke="#303030" stroke-width="0.8"/>
 <circle cx="1182" cy="704.5" r="4.2" fill="#e02828" stroke="#fff" stroke-width="0.9"/>
 <path d="M1180 702.5 L1184 706.5 M1184 702.5 L1180 706.5" stroke="#fff" stroke-width="1.3"/>
</svg>
<div class="t" style="left:1208px;top:685px;color:#000;letter-spacing:-0.172px">9:58 AM</div>
<div class="t" style="left:1204px;top:702px;color:#000;letter-spacing:-0.124px">5/24/2019</div>
</body></html>
